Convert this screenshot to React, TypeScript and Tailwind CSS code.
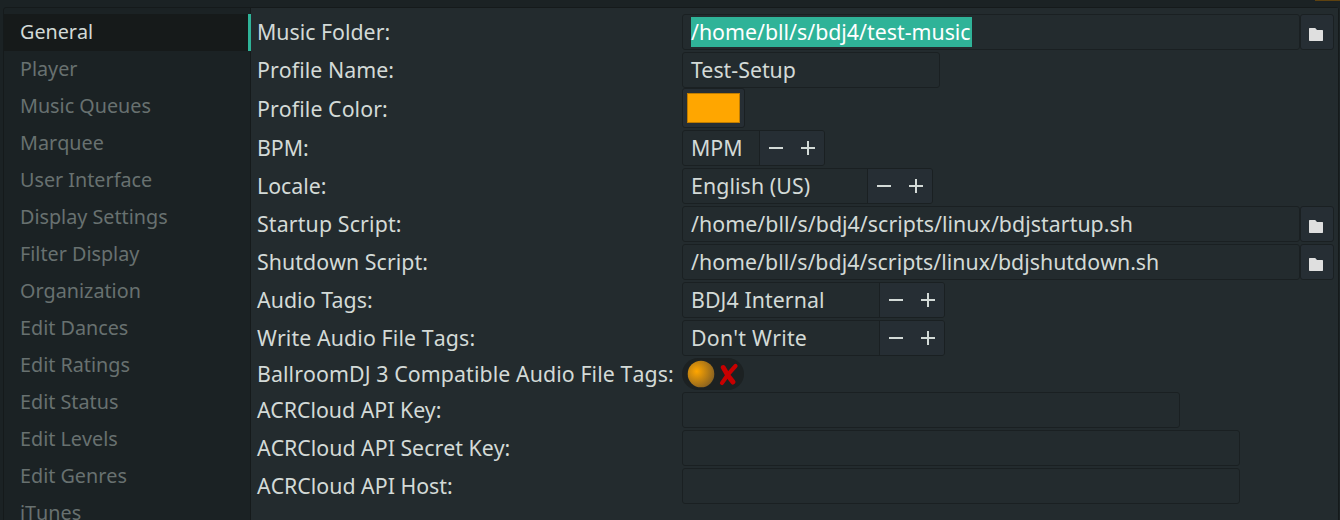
import type { ReactNode } from 'react';

const tabs = [
  'General',
  'Player',
  'Music Queues',
  'Marquee',
  'User Interface',
  'Display Settings',
  'Filter Display',
  'Organization',
  'Edit Dances',
  'Edit Ratings',
  'Edit Status',
  'Edit Levels',
  'Edit Genres',
  'iTunes',
];

type RowProps = { label: string; className?: string; tracking?: string; children: ReactNode };

function Row({ label, className = 'h-9', tracking = '', children }: RowProps) {
  return (
    <div className={`flex shrink-0 items-center ${className}`}>
      <div className={`w-[425px] shrink-0 whitespace-nowrap ${tracking}`}>{label}</div>
      {children}
    </div>
  );
}

type EntryProps = { value?: string; width: string; selected?: boolean; tracking?: string };

function Entry({ value = '', width, selected = false, tracking = '' }: EntryProps) {
  return (
    <div className={`flex h-9 shrink-0 items-center rounded-[3px] border border-[#1a2022] pl-2 ${width}`}>
      {selected ? (
        <span className="h-[30px] w-[281px] bg-[#2fb398] leading-[30px] whitespace-nowrap text-white">{value}</span>
      ) : (
        <span className={`whitespace-nowrap ${tracking}`}>{value}</span>
      )}
    </div>
  );
}

function FileEntry({ value, selected, tracking }: { value: string; selected?: boolean; tracking?: string }) {
  return (
    <>
      <Entry value={value} width="w-[618px]" selected={selected} tracking={tracking} />
      <button className="flex h-9 w-[34px] shrink-0 items-start rounded-[3px] border border-[#1a2022] bg-[#262e34] pt-[13px] pl-2">
        <svg width="14" height="13" viewBox="0 0 14 13">
          <path d="M.5 0h5.700l1.800 2h5.500l.5.500v10l-.5.500h-13l-.5-.5v-12z" fill="#dfdfdf" />
        </svg>
      </button>
    </>
  );
}

function Spinner({ value, width, tracking = '' }: { value: string; width: string; tracking?: string }) {
  return (
    <div className={`flex h-9 shrink-0 overflow-hidden rounded-[3px] border border-[#1a2022] ${width}`}>
      <div className={`flex flex-1 items-center pl-2 whitespace-nowrap ${tracking}`}>{value}</div>
      <div className="flex w-[65px] border-l border-[#1a2022] bg-[#262e34]">
        <svg width="64" height="34" viewBox="0 0 64 34" fill="#d3dad7">
          <path d="M9 16h14v2H9zM41 16h14v2H41zM47 10h2v14h-2z" />
        </svg>
      </div>
    </div>
  );
}

export default function App() {
  return (
    <div className="relative h-[520px] w-[1340px] overflow-hidden bg-[#1b2224] pt-[7px] pl-[3px] font-['Noto_Sans',sans-serif] text-[21.333px] leading-none text-[#d3dad7] [font-kerning:none]">
      <div className="absolute top-0 left-[1315px] h-px w-[25px] bg-[#5e4210]" />
      <div className="flex h-[540px] w-[1336px] rounded-[3px] border border-[#151a1b]">
        <nav className="flex w-[247px] shrink-0 flex-col border-r border-[#151a1b] pt-1.5 text-[19.75px]">
          {tabs.map((tab, i) => (
            <div
              key={tab}
              className={
                i === 0
                  ? '-mr-px flex h-[37px] shrink-0 items-center border-r-3 border-[#2fb398] bg-[#161a1a] pb-0.5 pl-4 text-[#d3dad7]'
                  : 'flex h-[37px] shrink-0 items-center pb-0.5 pl-4 text-[#687170]'
              }
            >
              {tab}
            </div>
          ))}
        </nav>
        <main className="flex flex-1 flex-col gap-0.5 bg-[#232b2e] pt-1.5 pl-1.5">
          <Row label="Music Folder:">
            <FileEntry value="/home/bll/s/bdj4/test-music" selected />
          </Row>
          <Row label="Profile Name:" tracking="tracking-[0.05px]">
            <Entry value="Test-Setup" width="w-[258px]" tracking="[font-kerning:normal]" />
          </Row>
          <Row label="Profile Color:" className="-mt-0.5 h-10 [&>div]:pt-0.5" tracking="tracking-[0.07px]">
            <button className="flex h-10 w-[63px] items-start rounded-[3px] border border-[#1a2022] bg-[#262e34] pt-1 pl-1">
              <span className="h-[30px] w-[53px] border border-[#bf7c00] bg-[#ffa600]" />
            </button>
          </Row>
          <Row label="BPM:">
            <Spinner value="MPM" width="w-[143px]" />
          </Row>
          <Row label="Locale:">
            <Spinner value="English (US)" width="w-[251px]" tracking="tracking-[0.09px]" />
          </Row>
          <Row label="Startup Script:" tracking="tracking-[0.14px]">
            <FileEntry value="/home/bll/s/bdj4/scripts/linux/bdjstartup.sh" tracking="tracking-[0.05px]" />
          </Row>
          <Row label="Shutdown Script:" tracking="tracking-[0.06px]">
            <FileEntry value="/home/bll/s/bdj4/scripts/linux/bdjshutdown.sh" tracking="tracking-[0.02px]" />
          </Row>
          <Row label="Audio Tags:" tracking="[font-kerning:normal] tracking-[0.06px]">
            <Spinner value="BDJ4 Internal" width="w-[263px]" tracking="tracking-[0.08px]" />
          </Row>
          <Row label="Write Audio File Tags:" tracking="tracking-[0.11px]">
            <Spinner value="Don't Write" width="w-[263px]" tracking="tracking-[0.23px]" />
          </Row>
          <Row label="BallroomDJ 3 Compatible Audio File Tags:" className="h-8" tracking="tracking-[0.09px]">
            <button className="h-8 w-[62px] rounded-full bg-[#1c2122]">
              <svg width="62" height="32" viewBox="0 0 62 32">
                <defs>
                  <radialGradient id="knob" cx="0.34" cy="0.4" r="0.68">
                    <stop offset="0" stopColor="#ffa600" />
                    <stop offset="1" stopColor="#8a6220" />
                  </radialGradient>
                </defs>
                <circle cx="19" cy="16" r="13.3" fill="url(#knob)" />
                <g fill="none" stroke="#c80000" strokeLinecap="round" strokeLinejoin="round">
                  <path d="M41.300 9.500Q45.500 18 51 24" strokeWidth="5" />
                  <path d="M53.500 8Q46 15.500 40 25" strokeWidth="4.200" />
                </g>
              </svg>
            </button>
          </Row>
          <Row label="ACRCloud API Key:" tracking="[font-kerning:normal]">
            <Entry width="w-[498px]" />
          </Row>
          <Row label="ACRCloud API Secret Key:">
            <Entry width="w-[558px]" />
          </Row>
          <Row label="ACRCloud API Host:">
            <Entry width="w-[558px]" />
          </Row>
        </main>
      </div>
    </div>
  );
}
